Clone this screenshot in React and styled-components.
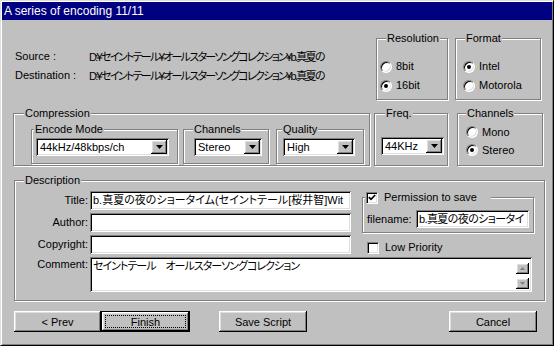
import React from "react";
import styled, { createGlobalStyle } from "styled-components";

const GlobalStyle = createGlobalStyle`
  html, body {
    margin: 0;
    padding: 0;
    background: #c0c0c0;
  }
  body {
    font-family: "Liberation Sans", "Noto Sans CJK JP", sans-serif;
    font-size: 11px;
    font-feature-settings: "palt";
    color: #000;
  }
  * {
    box-sizing: border-box;
  }
`

const raised = `
  box-shadow: inset -1px -1px #000, inset 1px 1px #fff, inset -2px -2px #808080, inset 2px 2px #dfdfdf;
`
const sunken = `
  box-shadow: inset 1px 1px #808080, inset -1px -1px #fff, inset 2px 2px #000, inset -2px -2px #dfdfdf;
`

const Window = styled.div`
  width: 554px;
  height: 346px;
  background: #c0c0c0;
  border: 1px solid;
  border-color: #dfdfdf #000 #000 #dfdfdf;
  box-shadow: inset 1px 1px #fff, inset -1px -1px #808080;
  padding: 1px;
  display: flex;
  flex-direction: column;
`

const TitleBar = styled.div`
  height: 18px;
  background: #000080;
  color: #fff;
  font-size: 12px;
  line-height: 18px;
  padding-left: 2px;
  white-space: nowrap;
`

const Row = styled.div`
  display: flex;
  align-items: flex-start;
  margin-top: ${(p) => p.$top || 0}px;
`

const Info = styled.div`
  width: 361px;
  margin-left: 13px;
  padding-top: 14px;
`

const InfoLine = styled.div`
  display: flex;
  align-items: center;
  height: 19px;
`

const InfoLabel = styled.span`
  width: 74px;
`

const InfoValue = styled.span`
  white-space: nowrap;
  letter-spacing: -1.7px;
`

const Group = styled.fieldset`
  margin: 0 0 0 ${(p) => p.$left || 0}px;
  padding: 0;
  min-width: 0;
  width: ${(p) => p.$w}px;
  height: ${(p) => p.$h}px;
  border: 1px solid #808080;
  box-shadow: inset 1px 1px #fff, 1px 1px #fff;
`

const Legend = styled.legend`
  margin-left: ${(p) => p.$offset || 8}px;
  padding: 0 ${(p) => p.$padRight || 1}px 0 1px;
  line-height: 13px;
  height: 13px;
  background: #c0c0c0;
  display: flex;
  align-items: center;
  white-space: nowrap;
`

const GroupBody = styled.div`
  padding: ${(p) => p.$top || 0}px 0 0 ${(p) => p.$left || 0}px;
  display: flex;
  flex-direction: ${(p) => (p.$row ? "row" : "column")};
`

const RadioRow = styled.label`
  display: flex;
  align-items: center;
  height: ${(p) => p.$h || 19}px;
  line-height: 13px;
  gap: 4px;
`

const RadioCircle = styled.span`
  width: 12px;
  height: 12px;
  border-radius: 50%;
  background: #fff;
  border: 1px solid;
  border-color: #808080 #fff #fff #808080;
  box-shadow: inset 1px 1px #000, inset -1px -1px #dfdfdf;
  display: flex;
  align-items: center;
  justify-content: center;
  flex: none;
`

const RadioDot = styled.span`
  width: 4px;
  height: 4px;
  border-radius: 50%;
  background: #000;
`

const Radio = ({ checked, children, h }) => (
  <RadioRow $h={h}>
    <RadioCircle>{checked && <RadioDot />}</RadioCircle>
    {children}
  </RadioRow>
)

const SelectBox = styled.div`
  width: ${(p) => p.$w}px;
  height: 18px;
  background: #fff;
  ${sunken}
  padding: 2px;
  display: flex;
  align-items: center;
`

const SelectText = styled.span`
  flex: 1;
  padding-left: 2px;
  white-space: nowrap;
  overflow: hidden;
`

const DropButton = styled.span`
  width: 16px;
  height: 14px;
  background: #c0c0c0;
  ${raised}
  display: flex;
  align-items: center;
  justify-content: center;
  flex: none;
`

const Select = ({ w, value }) => (
  <SelectBox $w={w}>
    <SelectText>{value}</SelectText>
    <DropButton>
      <svg width="7" height="4" viewBox="0 0 7 4">
        <path d="M0 0h7L3.5 4z" fill="#000" />
      </svg>
    </DropButton>
  </SelectBox>
)

const Description = styled.div`
  padding: 4px 0 0 1px;
`

const Upper = styled.div`
  display: flex;
  height: 63px;
`

const Fields = styled.div`
  display: flex;
  flex-direction: column;
  gap: 3px;
`

const FieldRow = styled.div`
  display: flex;
  align-items: ${(p) => (p.$top ? "flex-start" : "center")};
`

const FieldLabel = styled.span`
  width: 72px;
  margin-right: 2px;
  text-align: right;
  line-height: 13px;
  padding-top: ${(p) => (p.$top ? 1 : 0)}px;
`

const TextBox = styled.div`
  width: ${(p) => p.$w}px;
  height: ${(p) => p.$h || 19}px;
  background: #fff;
  ${sunken}
  padding: 2px 3px;
  line-height: 15px;
  white-space: nowrap;
  display: flex;
`

const TextValue = styled.span`
  flex: 1;
  letter-spacing: ${(p) => p.$spacing || 0}px;
`

const Side = styled.div`
  margin-left: 11px;
  display: flex;
  flex-direction: column;
`

const CheckRow = styled.label`
  display: flex;
  align-items: center;
  gap: 6px;
  height: 13px;
  line-height: 13px;
  margin-left: ${(p) => p.$left || 0}px;
  margin-top: ${(p) => p.$top || 0}px;
`

const CheckBox = styled.span`
  width: 12px;
  height: 12px;
  background: #fff;
  border: 1px solid;
  border-color: #808080 #fff #fff #808080;
  box-shadow: inset 1px 1px #000, inset -1px -1px #dfdfdf;
  display: flex;
  align-items: center;
  justify-content: center;
  flex: none;
`

const Check = ({ checked, children, left, top }) => (
  <CheckRow $left={left} $top={top}>
    <CheckBox>
      {checked && (
        <svg width="8" height="7" viewBox="0 0 8 7">
          <path d="M0.8 3.2 L3 5.4 L7.2 1" stroke="#000" strokeWidth="1.7" fill="none" />
        </svg>
      )}
    </CheckBox>
    {children}
  </CheckRow>
)

const FileRow = styled.div`
  display: flex;
  align-items: center;
  padding: 6px 0 0 4px;
`

const FileLabel = styled.span`
  width: 49px;
`

const CommentRow = styled.div`
  display: flex;
  align-items: flex-start;
  margin-top: 3px;
`

const ScrollCol = styled.div`
  display: flex;
  flex-direction: column;
  justify-content: space-between;
  padding: 4px 0 1px;
  width: 13px;
`

const ScrollButton = styled.span`
  width: 13px;
  height: 11px;
  background: #c0c0c0;
  ${raised}
  display: flex;
  align-items: center;
  justify-content: center;
`

const ButtonBar = styled.div`
  display: flex;
  margin-top: 10px;
  margin-left: 12px;
`

const Button = styled.button`
  width: ${(p) => p.$w || 88}px;
  height: 21px;
  margin-left: ${(p) => p.$left || 0}px;
  padding: 0;
  font: inherit;
  color: #000;
  background: #c0c0c0;
  border: ${(p) => (p.$default ? "1px solid #000" : "none")};
  ${raised}
  outline: ${(p) => (p.$default ? "1px dotted #000" : "none")};
  outline-offset: -5px;
`

const App = () => {
  return (
    <Window>
      <GlobalStyle />
      <TitleBar>A series of encoding 11/11</TitleBar>

      <Row $top={12}>
        <Info>
          <InfoLine>
            <InfoLabel>Source :</InfoLabel>
            <InfoValue>D:¥セイントテール¥オールスターソングコレクション¥b.真夏の</InfoValue>
          </InfoLine>
          <InfoLine>
            <InfoLabel>Destination :</InfoLabel>
            <InfoValue>D:¥セイントテール¥オールスターソングコレクション¥b.真夏の</InfoValue>
          </InfoLine>
        </Info>
        <Group $w={72} $h={68}>
          <Legend $offset={9}>Resolution</Legend>
          <GroupBody $top={12} $left={3}>
            <Radio>8bit</Radio>
            <Radio checked>16bit</Radio>
          </GroupBody>
        </Group>
        <Group $w={86} $h={68} $left={7}>
          <Legend $offset={9}>Format</Legend>
          <GroupBody $top={12} $left={7}>
            <Radio checked>Intel</Radio>
            <Radio>Motorola</Radio>
          </GroupBody>
        </Group>
      </Row>

      <Row $top={7}>
        <Group $w={357} $h={59} $left={11}>
          <Legend $offset={10}>Compression</Legend>
          <GroupBody $row $top={3} $left={17}>
            <Group $w={147} $h={41}>
              <Legend $offset={2}>Encode Mode</Legend>
              <GroupBody $top={2} $left={4}>
                <Select w={133} value="44kHz/48kbps/ch" />
              </GroupBody>
            </Group>
            <Group $w={86} $h={41} $left={5}>
              <Legend $offset={9}>Channels</Legend>
              <GroupBody $top={2} $left={10}>
                <Select w={68} value="Stereo" />
              </GroupBody>
            </Group>
            <Group $w={88} $h={41} $left={7}>
              <Legend $offset={5}>Quality</Legend>
              <GroupBody $top={2} $left={6}>
                <Select w={72} value="High" />
              </GroupBody>
            </Group>
          </GroupBody>
        </Group>
        <Group $w={74} $h={59} $left={4}>
          <Legend $offset={10}>Freq.</Legend>
          <GroupBody $top={17} $left={6}>
            <Select w={63} value="44KHz" />
          </GroupBody>
        </Group>
        <Group $w={86} $h={59} $left={9}>
          <Legend $offset={8}>Channels</Legend>
          <GroupBody $top={3} $left={8}>
            <Radio h={18}>Mono</Radio>
            <Radio h={18} checked>Stereo</Radio>
          </GroupBody>
        </Group>
      </Row>

      <Row $top={8}>
        <Group $w={531} $h={127} $left={12}>
          <Legend $offset={9}>Description</Legend>
          <Description>
            <Upper>
              <Fields>
                <FieldRow>
                  <FieldLabel>Title:</FieldLabel>
                  <TextBox $w={261}>
                    <TextValue>b.真夏の夜のショータイム(セイントテール[桜井智]Wit</TextValue>
                  </TextBox>
                </FieldRow>
                <FieldRow>
                  <FieldLabel>Author:</FieldLabel>
                  <TextBox $w={261} />
                </FieldRow>
                <FieldRow>
                  <FieldLabel>Copyright:</FieldLabel>
                  <TextBox $w={261} />
                </FieldRow>
              </Fields>
              <Side>
                <Group $w={172} $h={43}>
                  <Legend $offset={2} $padRight={14}>
                    <Check checked>Permission to save</Check>
                  </Legend>
                  <FileRow>
                    <FileLabel>filename:</FileLabel>
                    <TextBox $w={113} $h={18}>
                      <TextValue $spacing={-0.6}>b.真夏の夜のショータイ</TextValue>
                    </TextBox>
                  </FileRow>
                </Group>
                <Check left={5} top={8}>Low Priority</Check>
              </Side>
            </Upper>
            <CommentRow>
              <FieldLabel $top>Comment:</FieldLabel>
              <TextBox $w={442} $h={35}>
                <TextValue $spacing={-1}>セイントテール　オールスターソングコレクション</TextValue>
                <ScrollCol>
                  <ScrollButton>
                    <svg width="5" height="3" viewBox="0 0 5 3">
                      <path d="M0 3h5L2.5 0z" fill="#808080" />
                    </svg>
                  </ScrollButton>
                  <ScrollButton>
                    <svg width="5" height="3" viewBox="0 0 5 3">
                      <path d="M0 0h5L2.5 3z" fill="#808080" />
                    </svg>
                  </ScrollButton>
                </ScrollCol>
              </TextBox>
            </CommentRow>
          </Description>
        </Group>
      </Row>

      <ButtonBar>
        <Button $w={87}>&lt; Prev</Button>
        <Button $w={89} $default>Finish</Button>
        <Button $w={88} $left={29}>Save Script</Button>
        <Button $w={88} $left={142}>Cancel</Button>
      </ButtonBar>
    </Window>
  );
}

export default App;
